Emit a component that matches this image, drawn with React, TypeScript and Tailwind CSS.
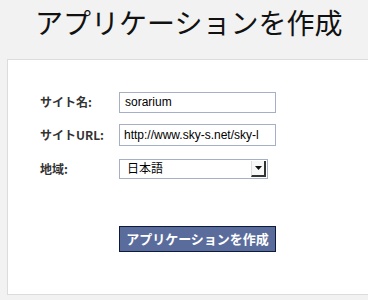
export default function App() {
  const font = "font-['Lucida_Grande','Noto_Sans_CJK_JP',sans-serif]";
  return (
    <div className={`h-[300px] w-[368px] overflow-hidden bg-[#f2f2f2] ${font}`}>
      <h1 className="h-[59px] pt-[2px] pl-[35px] text-[28px] leading-[40px] text-[#111] font-['Noto_Sans_CJK_JP',sans-serif]">
        アプリケーションを作成
      </h1>
      <div className="ml-[7px] h-[236px] border border-[#dcdcdc] border-r-0 bg-white pl-[32px] pt-[31px]">
        <div className="flex h-[22px] items-center">
          <span className="w-[79px] text-[12px] font-bold text-[#333] font-['Noto_Sans_CJK_JP',sans-serif]">サイト名:</span>
          <div className="flex h-[21px] w-[157px] items-center border border-[#a6b0c4] px-[5px] text-[12px] text-black font-['Liberation_Sans',sans-serif]">
            sorarium
          </div>
        </div>
        <div className="mt-[11px] flex h-[22px] items-center">
          <span className="w-[79px] text-[12px] font-bold text-[#333] font-['Noto_Sans_CJK_JP',sans-serif]">サイトURL:</span>
          <div className="flex h-[22px] w-[157px] items-center overflow-hidden whitespace-nowrap border border-[#a6b0c4] px-[4px] text-[12px] text-black font-['Liberation_Sans',sans-serif]">
            http://www.sky-s.net/sky-l
          </div>
        </div>
        <div className="mt-[13px] flex h-[20px] items-center">
          <span className="w-[79px] text-[12px] font-bold text-[#333] font-['Noto_Sans_CJK_JP',sans-serif]">地域:</span>
          <div className="flex h-[20px] w-[149px] items-start justify-between border border-[#a6b0c4] pl-[7px] text-[12px] text-black">
            <span className="leading-[15px] font-['Noto_Sans_CJK_JP',sans-serif]">日本語</span>
            <div className="mr-[1px] mt-[1px] flex h-[16px] w-[15px] items-center justify-center border-r-2 border-b-2 border-[#333] border-l border-l-[#ddd] bg-[#f8f8f8]">
              <svg width="7" height="4" viewBox="0 0 7 4">
                <path d="M0 0H7L3.5 4Z" fill="#111" />
              </svg>
            </div>
          </div>
        </div>
        <div className="ml-[79px] mt-[47px] flex h-[26px] w-[157px] items-center justify-center border border-[#0e1a3a] bg-[#5a6c9c] text-[13px] font-bold text-white font-['Noto_Sans_CJK_JP',sans-serif]">
          アプリケーションを作成
        </div>
      </div>
    </div>
  );
}
